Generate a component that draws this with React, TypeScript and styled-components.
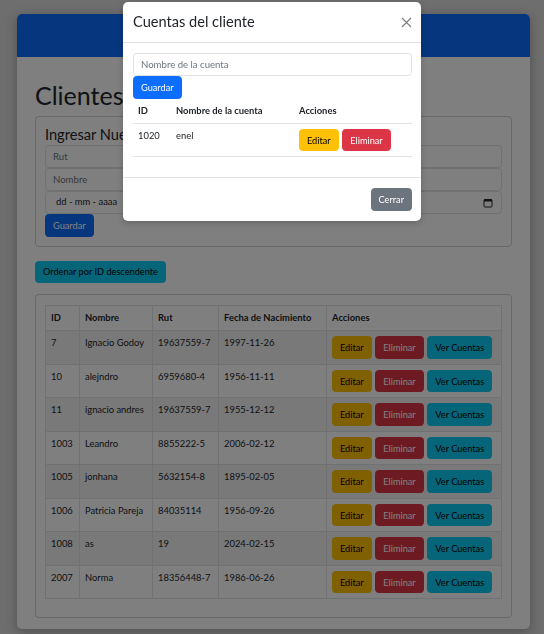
import React from "react";
import styled, { createGlobalStyle, css } from "styled-components";

const GlobalStyle = createGlobalStyle`
  * { box-sizing: border-box; }
  html, body { margin: 0; padding: 0; }
  body {
    background: #dcdcdc;
    font-family: Lato, "Noto Sans", Arial, sans-serif;
    font-size: 9.4px;
    line-height: 1.5;
    color: #212529;
  }
`;

type Variant = "primary" | "secondary" | "warning" | "danger" | "info";

const variants: Record<Variant, { bg: string; fg: string }> = {
  primary: { bg: "#0d6efd", fg: "#ffffff" },
  secondary: { bg: "#6c757d", fg: "#ffffff" },
  warning: { bg: "#ffc107", fg: "#000000" },
  danger: { bg: "#dc3545", fg: "#ffffff" },
  info: { bg: "#0dcaf0", fg: "#000000" },
};

const Button = styled.button<{ $variant: Variant }>`
  display: inline-flex;
  align-items: center;
  justify-content: center;
  height: 22.5px;
  padding: 0 7px;
  border-radius: 3.6px;
  font-family: inherit;
  font-size: 9.2px;
  line-height: 1;
  cursor: pointer;
  white-space: nowrap;
  ${({ $variant }) => css`
    background: ${variants[$variant].bg};
    border: 1px solid ${variants[$variant].bg};
    color: ${variants[$variant].fg};
  `}
`;

const Page = styled.div`
  padding: 14px 14px 9px 17px;
  min-height: 634px;
`;

const MainCard = styled.div`
  background: #ffffff;
  border-radius: 5px;
  overflow: hidden;
  box-shadow: 0 3px 12px rgba(0, 0, 0, 0.28);
`;

const Banner = styled.div`
  background: #0d6efd;
  height: 43px;
`;

const MainBody = styled.div`
  padding: 24px 18px 11px;
`;

const PageTitle = styled.h1`
  margin: 0 0 6px;
  font-size: 25px;
  line-height: 29px;
  font-weight: 400;
`;

const Panel = styled.div<{ $pad: string }>`
  border: 1px solid rgba(0, 0, 0, 0.175);
  border-radius: 4px;
  padding: ${({ $pad }) => $pad};
`;

const PanelTitle = styled.h4`
  margin: 0 0 2px;
  font-size: 14.6px;
  line-height: 17px;
  font-weight: 400;
`;

const Stack = styled.div`
  display: flex;
  flex-direction: column;
  align-items: flex-start;
`;

const TextInput = styled.input`
  display: block;
  width: 100%;
  height: 23px;
  padding: 0 7px;
  border: 1px solid #dee2e6;
  border-radius: 3.6px;
  background: #ffffff;
  font-family: inherit;
  font-size: 9.6px;
  color: #212529;
  &::placeholder { color: #6c757d; }
`;

const DateField = styled.div`
  display: flex;
  align-items: center;
  justify-content: space-between;
  width: 100%;
  height: 23px;
  padding: 0 8px 0 10px;
  border: 1px solid #dee2e6;
  border-radius: 3.6px;
  background: #ffffff;
  color: #212529;
`;

const SortRow = styled.div`
  margin: 14px 0 11px;
`;

const Table = styled.table`
  width: 100%;
  table-layout: fixed;
  border-collapse: collapse;
  border: 1px solid #dee2e6;
  margin-bottom: 0;
`;

const Th = styled.th`
  text-align: left;
  font-weight: 700;
  padding: 5px;
  border: 1px solid #dee2e6;
  line-height: 14.4px;
  white-space: nowrap;
`;

const Tr = styled.tr<{ $striped: boolean }>`
  background: ${({ $striped }) => ($striped ? "#f2f2f2" : "#ffffff")};
`;

const Td = styled.td`
  padding: 5px;
  border: 1px solid #dee2e6;
  vertical-align: top;
  line-height: 14.4px;
  white-space: nowrap;
`;

const Actions = styled.div`
  display: flex;
  gap: 3.6px;
`;

/* Modal */
const Backdrop = styled.div`
  position: fixed;
  inset: 0;
  background: rgba(0, 0, 0, 0.5);
`;

const ModalWrap = styled.div`
  position: fixed;
  inset: 0;
  display: flex;
  justify-content: center;
  align-items: flex-start;
  padding-top: 2px;
`;

const ModalContent = styled.div`
  width: 298px;
  background: #ffffff;
  border-radius: 5px;
  box-shadow: 0 2px 6px rgba(0, 0, 0, 0.2);
`;

const ModalHeader = styled.div`
  display: flex;
  align-items: center;
  justify-content: space-between;
  height: 41px;
  padding: 0 8px 0 10px;
  border-bottom: 1px solid #dee2e6;
`;

const ModalTitle = styled.h5`
  margin: 0;
  font-size: 14.6px;
  line-height: 18px;
  font-weight: 400;
`;

const CloseButton = styled.button`
  display: flex;
  align-items: center;
  justify-content: center;
  width: 14px;
  height: 14px;
  padding: 0;
  border: 0;
  background: transparent;
  opacity: 0.5;
  cursor: pointer;
`;

const ModalBody = styled.div`
  padding: 10px 9px 10px 10px;
`;

const SubTable = styled.table`
  width: 100%;
  table-layout: fixed;
  border-collapse: collapse;
  margin-bottom: 10px;
`;

const SubTh = styled.th`
  text-align: left;
  font-weight: 700;
  padding: 5px;
  line-height: 14.4px;
  border-bottom: 1px solid #dee2e6;
`;

const SubTd = styled.td`
  padding: 5px;
  line-height: 14.4px;
  vertical-align: top;
  border-bottom: 1px solid #dee2e6;
`;

const ModalFooter = styled.div`
  display: flex;
  justify-content: flex-end;
  padding: 10px 9px 10px 10px;
  border-top: 1px solid #dee2e6;
`;

const clientes = [
  { id: "7", nombre: "Ignacio Godoy", rut: "19637559-7", fecha: "1997-11-26" },
  { id: "10", nombre: "alejndro", rut: "6959680-4", fecha: "1956-11-11" },
  { id: "11", nombre: "ignacio andres", rut: "19637559-7", fecha: "1955-12-12" },
  { id: "1003", nombre: "Leandro", rut: "8855222-5", fecha: "2006-02-12" },
  { id: "1005", nombre: "jonhana", rut: "5632154-8", fecha: "1895-02-05" },
  { id: "1006", nombre: "Patricia Pareja", rut: "84035114", fecha: "1956-09-26" },
  { id: "1008", nombre: "as", rut: "19", fecha: "2024-02-15" },
  { id: "2007", nombre: "Norma", rut: "18356448-7", fecha: "1986-06-26" },
];

const mainCols = [34, 73, 66, 108];
const subCols = [38, 123];

const CalendarIcon = () => (
  <svg width="10" height="10" viewBox="0 0 10 10" fill="none">
    <rect x="1" y="1.5" width="8" height="7.5" rx="1" stroke="#212529" strokeWidth="1" />
    <rect x="1" y="1.5" width="8" height="2" fill="#212529" />
  </svg>
);

const CloseIcon = () => (
  <svg width="11" height="11" viewBox="0 0 11 11">
    <path d="M1 1 L10 10 M10 1 L1 10" stroke="#000" strokeWidth="1.2" />
  </svg>
);

export default function App() {
  return (
    <>
      <GlobalStyle />
      <Page>
        <MainCard>
          <Banner />
          <MainBody>
            <PageTitle>Clientes</PageTitle>
            <Panel $pad="9px">
              <PanelTitle>Ingresar Nuevo Cliente</PanelTitle>
              <Stack>
                <TextInput placeholder="Rut" />
                <TextInput placeholder="Nombre" />
                <DateField>
                  <span>dd - mm - aaaa</span>
                  <CalendarIcon />
                </DateField>
                <Button $variant="primary">Guardar</Button>
              </Stack>
            </Panel>
            <SortRow>
              <Button $variant="info">Ordenar por ID descendente</Button>
            </SortRow>
            <Panel $pad="10px 9px 18px">
              <Table>
                <colgroup>
                  {mainCols.map((w, i) => (
                    <col key={i} style={{ width: w }} />
                  ))}
                  <col />
                </colgroup>
                <thead>
                  <tr>
                    <Th>ID</Th>
                    <Th>Nombre</Th>
                    <Th>Rut</Th>
                    <Th>Fecha de Nacimiento</Th>
                    <Th>Acciones</Th>
                  </tr>
                </thead>
                <tbody>
                  {clientes.map((c, i) => (
                    <Tr key={c.id} $striped={i % 2 === 0}>
                      <Td>{c.id}</Td>
                      <Td>{c.nombre}</Td>
                      <Td>{c.rut}</Td>
                      <Td>{c.fecha}</Td>
                      <Td>
                        <Actions>
                          <Button $variant="warning">Editar</Button>
                          <Button $variant="danger">Eliminar</Button>
                          <Button $variant="info">Ver Cuentas</Button>
                        </Actions>
                      </Td>
                    </Tr>
                  ))}
                </tbody>
              </Table>
            </Panel>
          </MainBody>
        </MainCard>
      </Page>
      <Backdrop />
      <ModalWrap>
        <ModalContent>
          <ModalHeader>
            <ModalTitle>Cuentas del cliente</ModalTitle>
            <CloseButton aria-label="Cerrar">
              <CloseIcon />
            </CloseButton>
          </ModalHeader>
          <ModalBody>
            <Stack>
              <TextInput placeholder="Nombre de la cuenta" />
              <Button $variant="primary">Guardar</Button>
            </Stack>
            <SubTable>
              <colgroup>
                {subCols.map((w, i) => (
                  <col key={i} style={{ width: w }} />
                ))}
                <col />
              </colgroup>
              <thead>
                <tr>
                  <SubTh>ID</SubTh>
                  <SubTh>Nombre de la cuenta</SubTh>
                  <SubTh>Acciones</SubTh>
                </tr>
              </thead>
              <tbody>
                <tr>
                  <SubTd>1020</SubTd>
                  <SubTd>enel</SubTd>
                  <SubTd>
                    <Actions>
                      <Button $variant="warning">Editar</Button>
                      <Button $variant="danger">Eliminar</Button>
                    </Actions>
                  </SubTd>
                </tr>
              </tbody>
            </SubTable>
          </ModalBody>
          <ModalFooter>
            <Button $variant="secondary">Cerrar</Button>
          </ModalFooter>
        </ModalContent>
      </ModalWrap>
    </>
  );
}
